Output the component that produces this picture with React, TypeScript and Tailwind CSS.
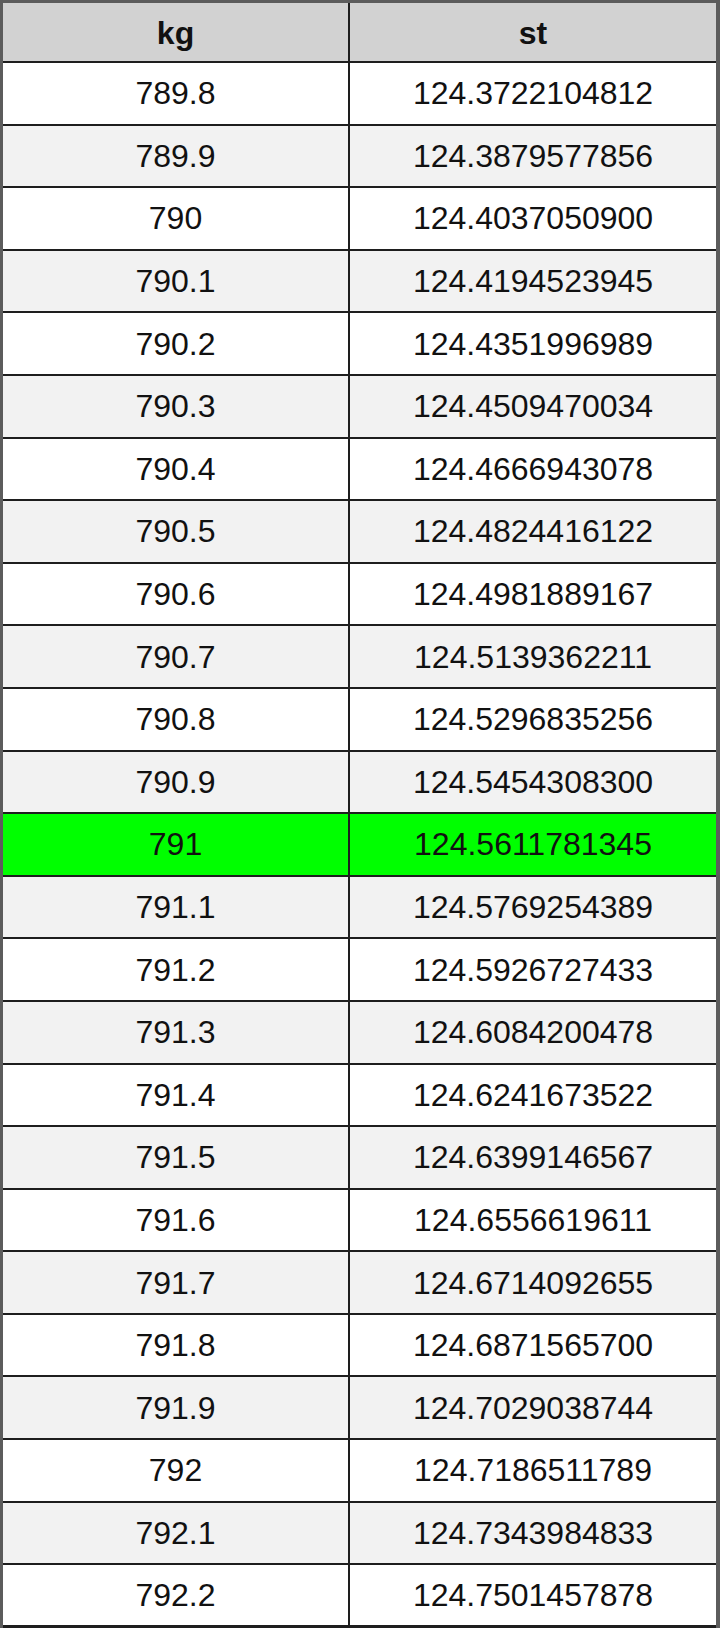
const rows: [string, string][] = [
  ["789.8", "124.3722104812"],
  ["789.9", "124.3879577856"],
  ["790", "124.4037050900"],
  ["790.1", "124.4194523945"],
  ["790.2", "124.4351996989"],
  ["790.3", "124.4509470034"],
  ["790.4", "124.4666943078"],
  ["790.5", "124.4824416122"],
  ["790.6", "124.4981889167"],
  ["790.7", "124.5139362211"],
  ["790.8", "124.5296835256"],
  ["790.9", "124.5454308300"],
  ["791", "124.5611781345"],
  ["791.1", "124.5769254389"],
  ["791.2", "124.5926727433"],
  ["791.3", "124.6084200478"],
  ["791.4", "124.6241673522"],
  ["791.5", "124.6399146567"],
  ["791.6", "124.6556619611"],
  ["791.7", "124.6714092655"],
  ["791.8", "124.6871565700"],
  ["791.9", "124.7029038744"],
  ["792", "124.7186511789"],
  ["792.1", "124.7343984833"],
  ["792.2", "124.7501457878"],
];

export default function App() {
  return (
    <div className="w-[720px] h-[1636px] bg-white font-['Liberation_Sans',Arial,sans-serif] text-[#111]">
      <div className="border-t-[3px] border-l-[3px] border-r-[4px] border-[#5c5c5c]">
        {/* header */}
        <div className="grid grid-cols-[347px_1fr] h-[60px] border-b-2 border-[#1e1e1e] bg-[#d2d2d2] text-[32px] font-bold">
          <div className="flex items-center justify-center pt-[2px] border-r-2 border-[#1e1e1e]">kg</div>
          <div className="flex items-center justify-center pt-[2px]">st</div>
        </div>

        {rows.map(([kg, st], i) => {
          const bg = kg === "791" ? "bg-[#00ff00]" : i % 2 === 1 ? "bg-[#f2f2f2]" : "bg-white";
          const last = i === rows.length - 1;
          return (
            <div
              key={kg}
              className={`grid grid-cols-[347px_1fr] text-[32px] border-[#1e1e1e] ${bg} ${
                last ? "h-[63px] border-b-[3px]" : "h-[62.6px] border-b-2"
              }`}
            >
              <div className="flex items-center justify-center border-r-2 border-[#1e1e1e]">{kg}</div>
              <div className="flex items-center justify-center">{st}</div>
            </div>
          );
        })}
      </div>
    </div>
  );
}
